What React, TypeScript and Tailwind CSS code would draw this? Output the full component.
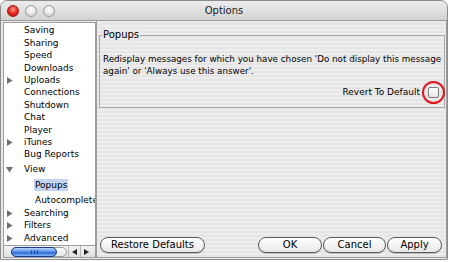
import React from "react";

const font = { fontFamily: '"DejaVu Sans", "Liberation Sans", sans-serif' };

function Tri({ down = false }: { down?: boolean }) {
  return (
    <svg width="7" height="7" viewBox="0 0 7 7" className="shrink-0">
      {down ? (
        <polygon points="0,1 7,1 3.5,6.5" fill="#6e6e6e" />
      ) : (
        <polygon points="1,0 6.5,3.5 1,7" fill="#6e6e6e" />
      )}
    </svg>
  );
}

type Item = { label: string; tri?: "r" | "d"; h: string; indent?: boolean; sel?: boolean };

const items: Item[] = [
  { label: "Saving", h: "h-[12.4px]" },
  { label: "Sharing", h: "h-[12.4px]" },
  { label: "Speed", h: "h-[12.4px]" },
  { label: "Downloads", h: "h-[12.4px]" },
  { label: "Uploads", tri: "r", h: "h-[12.4px]" },
  { label: "Connections", h: "h-[12.4px]" },
  { label: "Shutdown", h: "h-[12.4px]" },
  { label: "Chat", h: "h-[12.4px]" },
  { label: "Player", h: "h-[12.4px]" },
  { label: "iTunes", tri: "r", h: "h-[12.4px]" },
  { label: "Bug Reports", h: "h-[12.4px]" },
  { label: "View", tri: "d", h: "h-[16px]" },
  { label: "Popups", h: "h-[16px]", indent: true, sel: true },
  { label: "Autocomplete", h: "h-[14px]", indent: true },
  { label: "Searching", tri: "r", h: "h-[12.4px]" },
  { label: "Filters", tri: "r", h: "h-[12.4px]" },
  { label: "Advanced", tri: "r", h: "h-[12.4px]" },
];

function Button({ label, w }: { label: string; w: string }) {
  return (
    <div
      className={`${w} h-[16px] rounded-full border border-[#5a5a5a] bg-[linear-gradient(180deg,#ffffff_0%,#f4f4f4_50%,#e6e6e6_100%)] flex items-center justify-center text-[10px] leading-none text-black shadow-[0_1px_0_#bdbdbd]`}
    >
      {label}
    </div>
  );
}

export default function App() {
  return (
    <div className="w-[450px] h-[262px] bg-white overflow-hidden" style={font}>
      <div className="w-[448px] h-[260px] rounded-t-[7px] border border-[#8c8c8c] flex flex-col overflow-hidden bg-[repeating-linear-gradient(180deg,#ededed_0px,#ededed_2px,#e5e5e5_2px,#e5e5e5_4px)]">
        {/* Title bar */}
        <div className="h-[20px] shrink-0 flex items-center border-b border-[#9a9a9a] bg-[linear-gradient(180deg,#ececec_0%,#dddddd_60%,#d2d2d2_100%)]">
          <div className="w-[60px] flex items-center gap-[6px] pl-[6px]">
            <div className="w-[12px] h-[12px] rounded-full border border-[#9a1c1c] bg-[radial-gradient(circle_at_50%_35%,#ff9a8a_0%,#e8201a_55%,#a01010_100%)]" />
            <div className="w-[12px] h-[12px] rounded-full border border-[#9a9a9a] bg-[radial-gradient(circle_at_50%_35%,#ffffff_0%,#e6e6e6_55%,#c2c2c2_100%)]" />
            <div className="w-[12px] h-[12px] rounded-full border border-[#9a9a9a] bg-[radial-gradient(circle_at_50%_35%,#ffffff_0%,#e6e6e6_55%,#c2c2c2_100%)]" />
          </div>
          <div className="flex-1 text-center text-[10px] text-[#1a1a1a]">Options</div>
          <div className="w-[60px]" />
        </div>

        {/* Body */}
        <div className="flex-1 flex pl-[2px] pb-[1px]">
          {/* Sidebar */}
          <div className="w-[93px] mt-[1px] bg-white border border-[#9c9c9c] flex flex-col overflow-hidden">
            <div className="flex-1 pt-[2px] text-[9px] text-black">
              {items.map((it) => (
                <div key={it.label} className={`${it.h} flex items-center whitespace-nowrap overflow-hidden`}>
                  <div className="w-[19px] shrink-0 pl-[2px] flex items-center">
                    {it.tri === "r" && <Tri />}
                    {it.tri === "d" && <Tri down />}
                  </div>
                  {it.indent && <div className="w-[11px] shrink-0" />}
                  <span className={it.sel ? "shrink-0 bg-[#c3d4f2] px-[1px] leading-[12px]" : "shrink-0 px-[1px]"}>{it.label}</span>
                </div>
              ))}
            </div>
            {/* horizontal scrollbar */}
            <div className="h-[12px] shrink-0 border-t border-[#9c9c9c] flex items-center bg-[linear-gradient(180deg,#f2f2f2,#e0e0e0)]">
              <div className="w-[56px] h-[10px] ml-[7px] rounded-full border border-[#9a9a9a] bg-[linear-gradient(180deg,#fafafa,#e8e8e8)] relative">
                <div className="absolute left-[-1px] top-[-1px] w-[46px] h-[10px] rounded-full border border-[#1b3d8f] bg-[linear-gradient(180deg,#bcd6fb_0%,#5b93e6_45%,#2e6ad6_60%,#8ab6f3_100%)] flex items-center justify-center gap-[2px]">
                  <div className="w-[1px] h-[4px] bg-[#1f4ea8]" />
                  <div className="w-[1px] h-[4px] bg-[#1f4ea8]" />
                  <div className="w-[1px] h-[4px] bg-[#1f4ea8]" />
                </div>
              </div>
              <div className="ml-[1px] w-[12px] h-[12px] border-l border-[#b5b5b5] flex items-center justify-center">
                <svg width="5" height="6" viewBox="0 0 5 6"><polygon points="5,0 0,3 5,6" fill="#222" /></svg>
              </div>
              <div className="w-[12px] h-[12px] border-l border-[#b5b5b5] flex items-center justify-center">
                <svg width="5" height="6" viewBox="0 0 5 6"><polygon points="0,0 5,3 0,6" fill="#222" /></svg>
              </div>
            </div>
          </div>

          {/* Right panel */}
          <div className="flex-1 border-l border-r border-b border-[#9c9c9c] flex flex-col pl-[2px] pr-[1px]">
            <div className="relative mt-[14px] h-[73px] border border-[#a8a8a8]">
              <div className="absolute left-[2px] top-[-8px] px-[1px] text-[10px] leading-[14px] text-black bg-[#eaeaea]">Popups</div>
              <div className="pt-[17px] pl-[3px] text-[8.75px] leading-[12px] text-black">
                Redisplay messages for which you have chosen 'Do not display this message
                <br />
                again' or 'Always use this answer'.
              </div>
              <div className="flex items-center justify-end mt-[9px] pr-[5px] gap-[8px]">
                <span className="text-[9px] leading-[12px] text-black">Revert To Default</span>
                <div className="relative w-[11px] h-[11px]">
                  <div className="w-[11px] h-[11px] rounded-[2px] border border-[#7a7a7a] bg-[linear-gradient(180deg,#ffffff,#e4e4e4)]" />
                  <div className="absolute left-[-6px] top-[-6px] w-[23px] h-[23px] rounded-full border-2 border-[#e2141c]" />
                </div>
              </div>
            </div>
            <div className="flex-1" />
            <div className="flex items-center pb-[4px] pl-[1px] pr-[3px]">
              <Button label="Restore Defaults" w="w-[105px]" />
              <div className="flex-1" />
              <div className="flex gap-[1px]">
                <Button label="OK" w="w-[64px]" />
                <Button label="Cancel" w="w-[63px]" />
                <Button label="Apply" w="w-[55px]" />
              </div>
            </div>
          </div>
        </div>
      </div>
    </div>
  );
}
